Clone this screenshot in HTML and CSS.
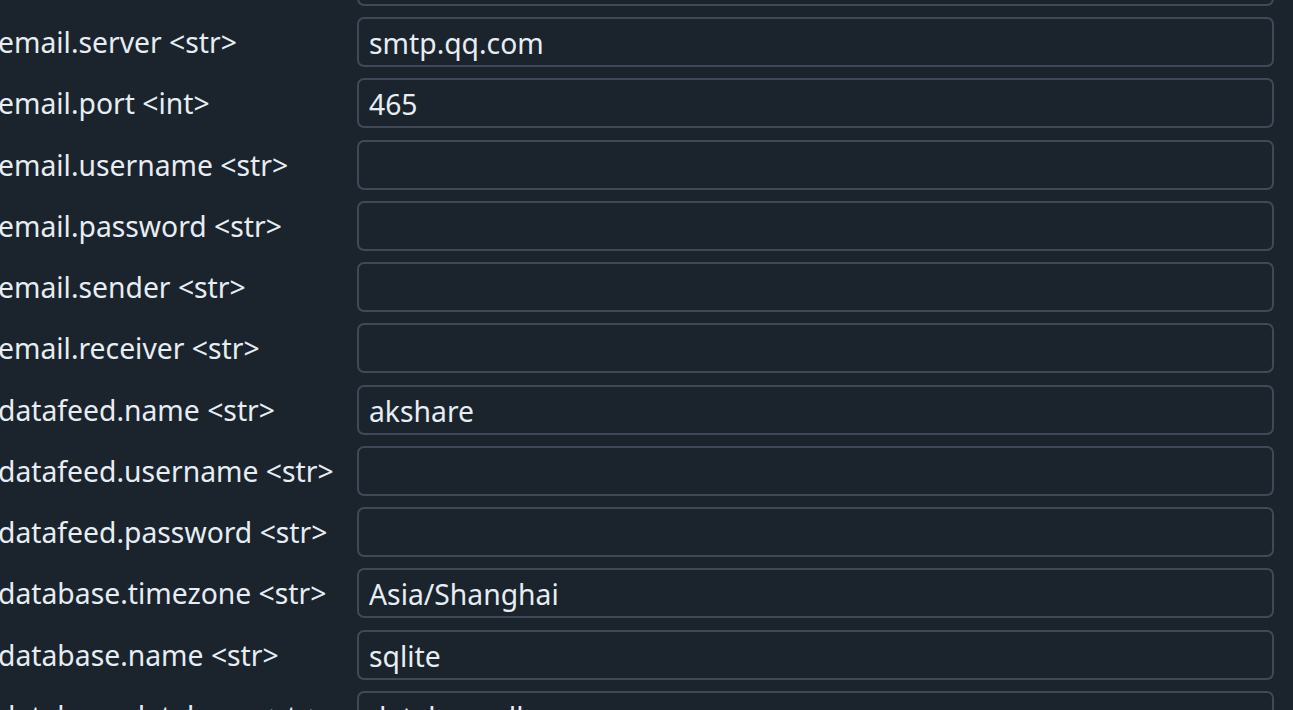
FILE: index.html
```html
<!DOCTYPE html>
<html lang="en">
<head>
<meta charset="utf-8">
<title>Settings</title>
<link rel="stylesheet" href="styles.css">
</head>
<body>
<form class="settings">
  <label class="label">email.active &lt;bool&gt;</label>
  <input class="field" type="text" value="">
  <label class="label">email.server &lt;str&gt;</label>
  <input class="field" type="text" value="smtp.qq.com">
  <label class="label">email.port &lt;int&gt;</label>
  <input class="field" type="text" value="465">
  <label class="label">email.username &lt;str&gt;</label>
  <input class="field" type="text" value="">
  <label class="label">email.password &lt;str&gt;</label>
  <input class="field" type="text" value="">
  <label class="label">email.sender &lt;str&gt;</label>
  <input class="field" type="text" value="">
  <label class="label">email.receiver &lt;str&gt;</label>
  <input class="field" type="text" value="">
  <label class="label">datafeed.name &lt;str&gt;</label>
  <input class="field" type="text" value="akshare">
  <label class="label">datafeed.username &lt;str&gt;</label>
  <input class="field" type="text" value="">
  <label class="label">datafeed.password &lt;str&gt;</label>
  <input class="field" type="text" value="">
  <label class="label">database.timezone &lt;str&gt;</label>
  <input class="field" type="text" value="Asia/Shanghai">
  <label class="label">database.name &lt;str&gt;</label>
  <input class="field" type="text" value="sqlite">
  <label class="label">database.database &lt;str&gt;</label>
  <input class="field" type="text" value="database.db">
</form>
</body>
</html>
```
FILE: styles.css
```css
html, body {
  margin: 0;
  padding: 0;
  background: #1b232d;
  height: 100%;
  overflow: hidden;
}
body {
  font-family: "Noto Sans", "Open Sans", sans-serif;
  color: #e6edf3;
}
.settings {
  display: grid;
  grid-template-columns: 359px 917px;
  grid-auto-rows: 50px;
  row-gap: 11.27px;
  margin: -44.27px 0 0 -2px;
}
.label {
  display: flex;
  align-items: center;
  font-size: 28.3px;
  white-space: nowrap;
}
.field {
  box-sizing: border-box;
  height: 50px;
  width: 917px;
  margin: 0;
  padding: 2px 10px 0;
  background: #1b232d;
  border: 2px solid #3f4957;
  border-radius: 7px;
  color: #e6edf3;
  font-family: "Noto Sans", "Open Sans", sans-serif;
  font-size: 28.3px;
  outline: none;
}
```
